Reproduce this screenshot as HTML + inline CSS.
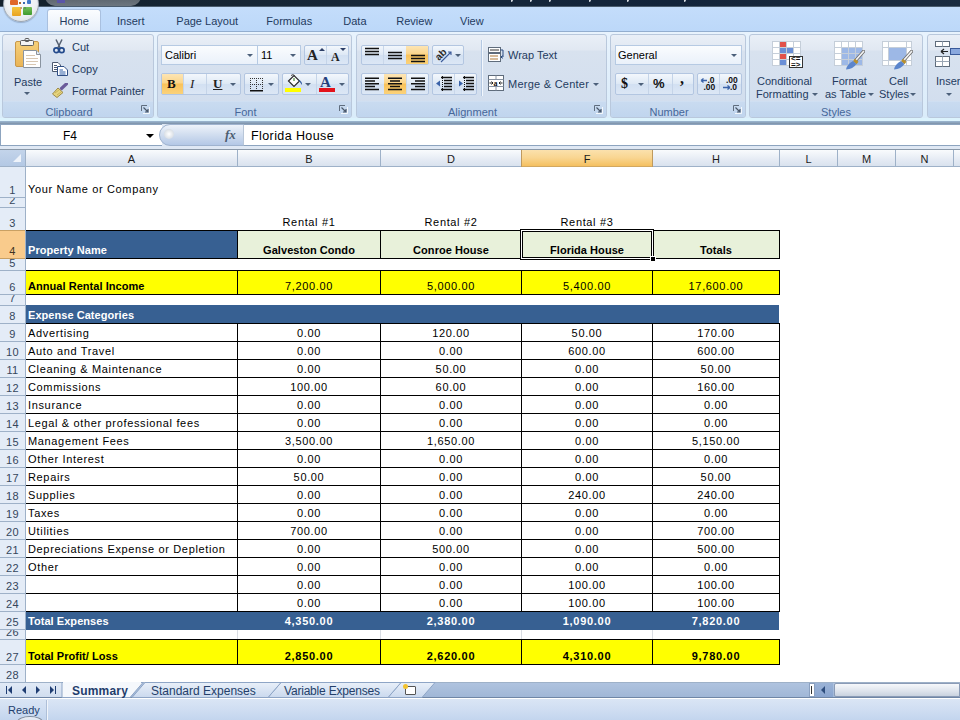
<!DOCTYPE html><html><head><meta charset="utf-8"><title>Excel</title><style>
*{margin:0;padding:0;box-sizing:border-box}
html,body{width:960px;height:720px;overflow:hidden}
body{position:relative;background:#fff;font-family:"Liberation Sans",sans-serif;font-size:11px;color:#000}
.a{position:absolute}
.t{position:absolute;white-space:nowrap;line-height:12px}
.c{text-align:center}
.rib{color:#243b60}
.grp{position:absolute;top:34px;height:84px;border:1px solid #b9c8dc;border-radius:3px;
 background:linear-gradient(#e9eff7 0px,#e1e8f2 15px,#d8e2ef 16px,#d2deee 68px)}
.glab{position:absolute;left:0;right:0;bottom:0;height:16px;background:linear-gradient(#c9dbf0,#c0d5ee);border-top:1px solid #cfdff2;
 color:#46679a;text-align:center;line-height:20px;font-size:11px;border-radius:0 0 2px 2px}
.launch{position:absolute;right:3px;bottom:3px;width:9px;height:9px}
.btn{position:absolute;border:1px solid #b3c6e1;border-radius:2px;background:linear-gradient(#f3f7fc,#dde8f5 50%,#d2e0f2 51%,#dce7f5)}
.combo{position:absolute;border:1px solid #b6cae3;background:linear-gradient(#fafcfe,#eaf1fa);}
.arr{position:absolute;width:0;height:0;border-left:3px solid transparent;border-right:3px solid transparent;border-top:3px solid #4c607a}
.hot{background:linear-gradient(#fde5b4,#fbd58a 45%,#f9c25a 50%,#fbd27a)!important;border-color:#c2a265!important}
.colh{position:absolute;top:150px;height:16px;background:linear-gradient(#f9fbfd,#e5ebf4 60%,#d9e2ee);color:#1b1b1b;text-align:center;line-height:19px;font-size:11px}
.rowh{position:absolute;left:0;width:25px;background:#e4ecf7;color:#23344a;text-align:center;font-size:11px;overflow:hidden}
.vl{position:absolute;width:1px;background:#000}
.hl{position:absolute;height:1px;background:#000}
.cell{position:absolute;white-space:nowrap;line-height:12px;letter-spacing:.65px}
.b{font-weight:bold;letter-spacing:.05px}
.bn{letter-spacing:.7px}
</style></head><body>
<div class="a" style="left:0;top:0;width:960px;height:8px;background:linear-gradient(90deg,#14212c,#17283a 40%,#13243a 70%,#1b2c40)"></div>
<div class="a" style="left:45px;top:-8px;width:96px;height:14px;border-radius:0 0 10px 10px;background:linear-gradient(#4f5861,#6d767f);"></div>
<div class="a" style="left:57px;top:0;width:8px;height:3px;background:#5a55a8"></div>
<div class="a" style="left:0;top:6px;width:960px;height:1px;background:#4a5c6e"></div>
<div class="a" style="left:511px;top:0;width:2px;height:2px;background:#d9dee4;border-radius:0 0 2px 0"></div>
<div class="a" style="left:530px;top:0;width:2px;height:2px;background:#d9dee4;border-radius:0 0 2px 0"></div>
<div class="a" style="left:549px;top:0;width:2px;height:2px;background:#d9dee4;border-radius:0 0 2px 0"></div>
<div class="a" style="left:589px;top:0;width:2px;height:2px;background:#d9dee4;border-radius:0 0 2px 0"></div>
<div class="a" style="left:627px;top:0;width:2px;height:2px;background:#d9dee4;border-radius:0 0 2px 0"></div>
<div class="a" style="left:684px;top:0;width:2px;height:2px;background:#d9dee4;border-radius:0 0 2px 0"></div>
<div class="a" style="left:0;top:7px;width:960px;height:25px;background:linear-gradient(#c4ddfb,#bcd8f9)"></div>
<div class="a" style="left:47px;top:9px;width:54px;height:24px;border:1px solid #a9c0df;border-bottom:none;border-radius:3px 3px 0 0;background:linear-gradient(#fbfdff,#e6eef9)"></div>
<div class="t rib" style="left:59.5px;top:15px">Home</div>
<div class="t rib" style="left:117px;top:15px">Insert</div>
<div class="t rib" style="left:176.3px;top:15px">Page Layout</div>
<div class="t rib" style="left:266.3px;top:15px">Formulas</div>
<div class="t rib" style="left:343.3px;top:15px">Data</div>
<div class="t rib" style="left:396.3px;top:15px">Review</div>
<div class="t rib" style="left:460px;top:15px">View</div>
<div class="a" style="left:3px;top:-14px;width:36px;height:36px;border-radius:18px;background:radial-gradient(circle at 50% 40%,#fbfcfd 0,#eef1f4 55%,#dde2e7 82%,#c3c9d0 100%);border:1px solid #9ea7b1;box-shadow:0 1px 1px rgba(60,80,110,.3)"></div>
<div class="a" style="left:10px;top:0;width:8px;height:5px;background:#e0662a;border-radius:1px"></div>
<div class="a" style="left:27px;top:0;width:4px;height:4px;background:#3f79c9;border-radius:1px"></div>
<div class="a" style="left:12px;top:7px;width:9px;height:9px;background:linear-gradient(#f5c640,#e8a220);border-radius:1px"></div>
<div class="a" style="left:23px;top:7px;width:9px;height:8px;background:linear-gradient(#76c05a,#3e9a2e);border-radius:1px"></div>
<div class="a" style="left:19px;top:2px;width:2px;height:2px;background:#a86a3a"></div>
<div class="a" style="left:23px;top:2px;width:2px;height:2px;background:#3a6ab0"></div>
<div class="a" style="left:20px;top:7px;width:2px;height:2px;background:#c9a070"></div>
<div class="a" style="left:24px;top:7px;width:2px;height:2px;background:#5a9a5a"></div>
<div class="a" style="left:0;top:31px;width:960px;height:91px;background:linear-gradient(#e8f3fd,#dfeefb 60%,#d9ecfa);border-top:1px solid #93aecf"></div>
<div class="a" style="left:0;top:118px;width:960px;height:3px;background:#dcf3fd"></div>
<div class="a" style="left:0;top:121px;width:960px;height:3px;background:linear-gradient(#9db8d2,#7d91a8)"></div>
<div class="grp" style="left:2px;width:152px"><div class="glab" style="padding-right:18px">Clipboard</div><svg class="launch" viewBox="0 0 9 9"><path d="M0.5 6 V0.5 H6" stroke="#5f6d7e" fill="none"/><path d="M2 8.5 H8.5 V2" stroke="#f4f8fc" fill="none"/><path d="M2.5 2.5 L7 7 M4 7 H7 V4" stroke="#4a586a" stroke-width="1.2" fill="none"/></svg></div>
<div class="grp" style="left:157px;width:195px"><div class="glab" style="padding-right:18px">Font</div><svg class="launch" viewBox="0 0 9 9"><path d="M0.5 6 V0.5 H6" stroke="#5f6d7e" fill="none"/><path d="M2 8.5 H8.5 V2" stroke="#f4f8fc" fill="none"/><path d="M2.5 2.5 L7 7 M4 7 H7 V4" stroke="#4a586a" stroke-width="1.2" fill="none"/></svg></div>
<div class="grp" style="left:356px;width:251px"><div class="glab" style="padding-right:18px">Alignment</div><svg class="launch" viewBox="0 0 9 9"><path d="M0.5 6 V0.5 H6" stroke="#5f6d7e" fill="none"/><path d="M2 8.5 H8.5 V2" stroke="#f4f8fc" fill="none"/><path d="M2.5 2.5 L7 7 M4 7 H7 V4" stroke="#4a586a" stroke-width="1.2" fill="none"/></svg></div>
<div class="grp" style="left:610px;width:136px"><div class="glab" style="padding-right:18px">Number</div><svg class="launch" viewBox="0 0 9 9"><path d="M0.5 6 V0.5 H6" stroke="#5f6d7e" fill="none"/><path d="M2 8.5 H8.5 V2" stroke="#f4f8fc" fill="none"/><path d="M2.5 2.5 L7 7 M4 7 H7 V4" stroke="#4a586a" stroke-width="1.2" fill="none"/></svg></div>
<div class="grp" style="left:749px;width:174px"><div class="glab" style="padding-right:0px">Styles</div></div>
<div class="grp" style="left:927px;width:60px"><div class="glab" style="padding-right:0px"></div></div>
<svg class="a" style="left:14px;top:38px" width="28" height="32" viewBox="0 0 28 32">
<defs><linearGradient id="pg" x1="0" y1="0" x2="0" y2="1"><stop offset="0" stop-color="#f6d07a"/><stop offset="1" stop-color="#eab456"/></linearGradient></defs>
<rect x="1.5" y="3.5" width="23" height="25" rx="1.5" fill="url(#pg)" stroke="#c8974a"/>
<rect x="6.5" y="2.5" width="13" height="5" rx="1" fill="#f4f4f4" stroke="#5e5e5e"/>
<rect x="11" y="0.5" width="4" height="3" rx="1" fill="none" stroke="#5e5e5e"/>
<path d="M9.5 12.5 H22.5 L26.5 16.5 V29.5 H9.5 Z" fill="#fff" stroke="#8a94a0"/>
<path d="M22.5 12.5 V16.5 H26.5" fill="#e8ecf0" stroke="#8a94a0"/>
<path d="M12 17.5 H21 M12 20.5 H24 M12 23.5 H24 M12 26.5 H22" stroke="#d8c7b2"/>
</svg>
<div class="t rib" style="left:14px;top:76px">Paste</div>
<div class="arr" style="left:24px;top:92px"></div>
<svg class="a" style="left:52px;top:39px" width="14" height="15" viewBox="0 0 14 15">
<path d="M4 0.5 L8.2 9 M10 0.5 L5.8 9" stroke="#555f70" stroke-width="1.5" fill="none"/>
<circle cx="4.3" cy="11.2" r="2.4" stroke="#234a8c" stroke-width="1.7" fill="none"/>
<circle cx="9.7" cy="11.2" r="2.4" stroke="#234a8c" stroke-width="1.7" fill="none"/></svg>
<div class="t rib" style="left:72px;top:41px">Cut</div>
<svg class="a" style="left:52px;top:62px" width="16" height="14" viewBox="0 0 16 14">
<path d="M0.5 0.5 H6 L8.5 3 V9.5 H0.5 Z" fill="#fff" stroke="#4d5a70"/>
<path d="M2 3.5 H5 M2 5.5 H6.5 M2 7.5 H6.5" stroke="#4d5a70"/>
<path d="M5.5 4.5 H12 L15.5 8 V13.5 H5.5 Z" fill="#fff" stroke="#2f4f86"/>
<path d="M7.5 8 H11 M7.5 10 H13.5 M7.5 12 H13.5" stroke="#2f5ea8"/>
</svg>
<div class="t rib" style="left:72px;top:63px">Copy</div>
<svg class="a" style="left:52px;top:83px" width="16" height="15" viewBox="0 0 16 15">
<path d="M9.5 5.5 L14.5 0.8" stroke="#6a5a9a" stroke-width="3.2" stroke-linecap="round"/>
<path d="M0.5 11 L6 5 L11 9.5 L5 14.5 Z" fill="#e6d47e" stroke="#9c8a48" stroke-width="1"/>
<path d="M3 10 L7 7 M5 12 L9 9" stroke="#c9b45a"/>
</svg>
<div class="t rib" style="left:72px;top:85px">Format Painter</div>
<div class="combo" style="left:161px;top:45px;width:97px;height:20px"></div>
<div class="t" style="left:165px;top:49px;color:#000">Calibri</div>
<div class="arr" style="left:247px;top:54px"></div>
<div class="combo" style="left:257px;top:45px;width:44px;height:20px"></div>
<div class="t" style="left:261px;top:49px;color:#000">11</div>
<div class="arr" style="left:290px;top:54px"></div>
<div class="btn" style="left:304px;top:45px;width:45px;height:20px"></div>
<div class="a" style="left:326px;top:46px;width:1px;height:18px;background:#c5d4e8"></div>
<div class="t" style="left:307px;top:47px;font:bold 15px 'Liberation Serif',serif;color:#222;line-height:16px">A</div>
<div class="a" style="left:319px;top:48px;width:0;height:0;border-left:3px solid transparent;border-right:3px solid transparent;border-bottom:3px solid #2c3e66"></div>
<div class="t" style="left:331px;top:50px;font:bold 12px 'Liberation Serif',serif;color:#222;line-height:14px">A</div>
<div class="arr" style="left:340px;top:48px;border-top-color:#2c3e66"></div>
<div class="btn" style="left:161px;top:73px;width:80px;height:22px"></div>
<div class="a hot" style="left:162px;top:74px;width:21px;height:20px;border:none"></div>
<div class="a" style="left:183px;top:74px;width:1px;height:20px;background:#c5d4e8"></div>
<div class="a" style="left:206px;top:74px;width:1px;height:20px;background:#c5d4e8"></div>
<div class="t" style="left:167px;top:77px;font:bold 13px 'Liberation Serif',serif;color:#111;line-height:14px">B</div>
<div class="t" style="left:190px;top:77px;font:italic 13px 'Liberation Serif',serif;color:#222;line-height:14px">I</div>
<div class="t" style="left:213px;top:77px;font:bold 13px 'Liberation Serif',serif;color:#222;line-height:14px;text-decoration:underline">U</div>
<div class="arr" style="left:230px;top:83px"></div>
<div class="btn" style="left:244px;top:73px;width:35px;height:22px"></div>
<svg class="a" style="left:250px;top:78px" width="14" height="14" viewBox="0 0 14 14"><rect x="0" y="0" width="1" height="1" fill="#333"/><rect x="2" y="0" width="1" height="1" fill="#333"/><rect x="4" y="0" width="1" height="1" fill="#333"/><rect x="6" y="0" width="1" height="1" fill="#333"/><rect x="8" y="0" width="1" height="1" fill="#333"/><rect x="10" y="0" width="1" height="1" fill="#333"/><rect x="12" y="0" width="1" height="1" fill="#333"/><rect x="0" y="2" width="1" height="1" fill="#333"/><rect x="6" y="2" width="1" height="1" fill="#333"/><rect x="12" y="2" width="1" height="1" fill="#333"/><rect x="0" y="4" width="1" height="1" fill="#333"/><rect x="6" y="4" width="1" height="1" fill="#333"/><rect x="12" y="4" width="1" height="1" fill="#333"/><rect x="0" y="6" width="1" height="1" fill="#333"/><rect x="2" y="6" width="1" height="1" fill="#333"/><rect x="4" y="6" width="1" height="1" fill="#333"/><rect x="6" y="6" width="1" height="1" fill="#333"/><rect x="8" y="6" width="1" height="1" fill="#333"/><rect x="10" y="6" width="1" height="1" fill="#333"/><rect x="12" y="6" width="1" height="1" fill="#333"/><rect x="0" y="8" width="1" height="1" fill="#333"/><rect x="6" y="8" width="1" height="1" fill="#333"/><rect x="12" y="8" width="1" height="1" fill="#333"/><rect x="0" y="10" width="1" height="1" fill="#333"/><rect x="6" y="10" width="1" height="1" fill="#333"/><rect x="12" y="10" width="1" height="1" fill="#333"/><rect x="0" y="12" width="13" height="1.5" fill="#111"/></svg>
<div class="arr" style="left:268px;top:83px"></div>
<div class="btn" style="left:282px;top:73px;width:67px;height:22px"></div>
<div class="a" style="left:316px;top:74px;width:1px;height:20px;background:#c5d4e8"></div>
<svg class="a" style="left:286px;top:74px" width="18" height="14" viewBox="0 0 18 14"><path d="M2.5 7 L8 1.5 L13.5 7 L8 12.5 Z" fill="#fff" stroke="#2b2b2b" stroke-width="1.2"/><path d="M5 1.5 Q7 -0.5 9 2" stroke="#444" fill="none"/><path d="M12 5.5 Q16.5 7 16 11 L14.5 9 Z" fill="#2e5aa0"/><path d="M8 4 L8 7" stroke="#4d8a3a" stroke-width="1.2"/></svg>
<div class="a" style="left:285px;top:88px;width:16px;height:4px;background:#ffff00"></div>
<div class="arr" style="left:305px;top:83px"></div>
<div class="t" style="left:320px;top:75px;font:bold 15px 'Liberation Serif',serif;color:#243f7c;line-height:14px">A</div>
<div class="a" style="left:319px;top:88px;width:16px;height:4px;background:#e3121b"></div>
<div class="arr" style="left:339px;top:83px"></div>
<div class="btn" style="left:361px;top:45px;width:68px;height:20px"></div>
<div class="a" style="left:383px;top:46px;width:1px;height:18px;background:#c9d7ea"></div>
<div class="a hot" style="left:406px;top:46px;width:22px;height:18px;border:none"></div>
<svg class="a" style="left:365px;top:47px" width="16" height="16" viewBox="0 0 16 16"><path d="M0 1.5H14M0 4.5H14M0 7.5H14" stroke="#111" stroke-width="1.5" fill="none"/></svg>
<svg class="a" style="left:388px;top:51px" width="16" height="16" viewBox="0 0 16 16"><path d="M0 1.5H14M0 4.5H14M0 7.5H14" stroke="#111" stroke-width="1.5" fill="none"/></svg>
<svg class="a" style="left:411px;top:54px" width="16" height="16" viewBox="0 0 16 16"><path d="M0 1.5H14M0 4.5H14M0 7.5H14" stroke="#111" stroke-width="1.5" fill="none"/></svg>
<div class="btn" style="left:432px;top:45px;width:32px;height:20px"></div>
<svg class="a" style="left:436px;top:47px" width="18" height="16" viewBox="0 0 18 16">
<text x="0" y="0" transform="translate(3,14) rotate(-45)" font-family="Liberation Sans" font-weight="bold" font-size="10" fill="#2a2a2a">ab</text>
<path d="M5 15 L15 5 M12 5 H15 V8" stroke="#3b5a9a" stroke-width="1.1" fill="none"/></svg>
<div class="arr" style="left:455px;top:54px"></div>
<div class="btn" style="left:361px;top:73px;width:68px;height:22px"></div>
<div class="a hot" style="left:384px;top:74px;width:22px;height:20px;border:none"></div>
<div class="a" style="left:406px;top:74px;width:1px;height:20px;background:#c9d7ea"></div>
<svg class="a" style="left:365px;top:77px" width="16" height="16" viewBox="0 0 16 16"><path d="M0 1.2H14M0 4H10M0 6.8H14M0 9.6H10M0 12.4H14" stroke="#111" stroke-width="1.5" fill="none"/></svg>
<svg class="a" style="left:388px;top:77px" width="16" height="16" viewBox="0 0 16 16"><path d="M0 1.2H14M2 4H12M0 6.8H14M2 9.6H12M0 12.4H14" stroke="#111" stroke-width="1.5" fill="none"/></svg>
<svg class="a" style="left:411px;top:77px" width="16" height="16" viewBox="0 0 16 16"><path d="M0 1.2H14M4 4H14M0 6.8H14M4 9.6H14M0 12.4H14" stroke="#111" stroke-width="1.5" fill="none"/></svg>
<div class="btn" style="left:432px;top:73px;width:45px;height:22px"></div>
<div class="a" style="left:454px;top:74px;width:1px;height:20px;background:#c9d7ea"></div>
<svg class="a" style="left:436px;top:76px" width="17" height="15" viewBox="0 0 17 15">
<path d="M5 1.5H16 M8 4.5H16 M8 7.5H16 M8 10.5H16 M5 13.5H16" stroke="#111" stroke-width="1.4"/>
<path d="M6.5 0V15" stroke="#111" stroke-width="1" stroke-dasharray="1 1"/>
<path d="M0 7.5 L4 4.5 V10.5 Z" fill="#3a62a8"/></svg>
<svg class="a" style="left:458px;top:76px" width="17" height="15" viewBox="0 0 17 15">
<path d="M5 1.5H16 M8 4.5H16 M8 7.5H16 M8 10.5H16 M5 13.5H16" stroke="#111" stroke-width="1.4"/>
<path d="M6.5 0V15" stroke="#111" stroke-width="1" stroke-dasharray="1 1"/>
<path d="M5 7.5 L1 4.5 V10.5 Z" fill="#3a62a8"/></svg>
<div class="a" style="left:481px;top:40px;width:1px;height:56px;background:#b5c9e3;box-shadow:1px 0 0 #f2f7fd"></div>
<svg class="a" style="left:488px;top:47px" width="17" height="15" viewBox="0 0 17 15">
<rect x="0.5" y="0.5" width="12" height="5" fill="#fff" stroke="#5f6c7c"/><path d="M2 3 H11" stroke="#333"/>
<rect x="0.5" y="6.5" width="12" height="8" fill="#fff" stroke="#5f6c7c"/><path d="M2 9 H10 M2 12 H10" stroke="#b07a3a" stroke-width="1.2"/>
<path d="M12.5 3 H15 V10 H13 M14.5 8.5 L13 10 L14.5 11.5" stroke="#2a4a80" fill="none"/>
</svg>
<div class="t rib" style="left:508px;top:49px">Wrap Text</div>
<svg class="a" style="left:488px;top:75px" width="17" height="16" viewBox="0 0 17 16">
<rect x="0.5" y="0.5" width="15" height="15" fill="#fff" stroke="#5f6c7c"/>
<path d="M0.5 4.5H15.5 M0.5 11.5H15.5 M8 0.5V4.5 M8 11.5V15.5" stroke="#8893a2"/>
<path d="M1.5 8 H5 M3.5 6.5 L5 8 L3.5 9.5 M14.5 8 H11 M12.5 6.5 L11 8 L12.5 9.5" stroke="#222" fill="none"/>
<text x="5.5" y="10.5" font-family="Liberation Serif" font-weight="bold" font-size="8" fill="#111">a</text>
</svg>
<div class="t rib" style="left:508px;top:78px;letter-spacing:.25px">Merge &amp; Center</div>
<div class="arr" style="left:593px;top:83px"></div>
<div class="combo" style="left:615px;top:45px;width:127px;height:20px"></div>
<div class="t" style="left:618px;top:49px;color:#000">General</div>
<div class="arr" style="left:731px;top:54px"></div>
<div class="btn" style="left:615px;top:73px;width:79px;height:22px"></div>
<div class="a" style="left:648px;top:74px;width:1px;height:20px;background:#c5d4e8"></div>
<div class="a" style="left:672px;top:74px;width:1px;height:20px;background:#c5d4e8"></div>
<div class="t" style="left:621px;top:77px;font:bold 14px 'Liberation Serif',serif;color:#111;line-height:14px">$</div>
<div class="arr" style="left:638px;top:83px"></div>
<div class="t" style="left:653px;top:77px;font:bold 13px 'Liberation Sans',sans-serif;color:#111;line-height:14px">%</div>
<div class="t" style="left:680px;top:72px;font:bold 16px 'Liberation Serif',serif;color:#111;line-height:14px">,</div>
<div class="btn" style="left:697px;top:73px;width:45px;height:22px"></div>
<div class="a" style="left:719px;top:74px;width:1px;height:20px;background:#c5d4e8"></div>
<svg class="a" style="left:699px;top:76px" width="42" height="15" viewBox="0 0 42 15">
<g font-family="Liberation Sans" font-weight="bold" font-size="8.5" fill="#111">
<text x="8.5" y="7">.0</text><text x="4.5" y="14">.00</text>
<text x="27" y="7">.00</text><text x="31" y="14">.0</text></g>
<path d="M2 4.5 H8 M2 4.5 L4.5 2.5 M2 4.5 L4.5 6.5" stroke="#3a62a8" stroke-width="1.3" fill="none"/>
<path d="M24 11.5 H31 M31 11.5 L28.5 9.5 M31 11.5 L28.5 13.5" stroke="#3a62a8" stroke-width="1.3" fill="none"/>
</svg>
<div class="a" style="left:772px;top:41px;width:29px;height:25px;background:#c5ced9"></div><div class="a" style="left:773px;top:42px;width:6px;height:5px;background:#fff"></div><div class="a" style="left:780px;top:42px;width:6px;height:5px;background:#e2524a"></div><div class="a" style="left:787px;top:42px;width:6px;height:5px;background:#fff"></div><div class="a" style="left:794px;top:42px;width:6px;height:5px;background:#fff"></div><div class="a" style="left:773px;top:48px;width:6px;height:5px;background:#fff"></div><div class="a" style="left:780px;top:48px;width:6px;height:5px;background:#6a8fd6"></div><div class="a" style="left:787px;top:48px;width:6px;height:5px;background:#6a8fd6"></div><div class="a" style="left:794px;top:48px;width:6px;height:5px;background:#fff"></div><div class="a" style="left:773px;top:54px;width:6px;height:5px;background:#fff"></div><div class="a" style="left:780px;top:54px;width:6px;height:5px;background:#e2524a"></div><div class="a" style="left:787px;top:54px;width:6px;height:5px;background:#fff"></div><div class="a" style="left:794px;top:54px;width:6px;height:5px;background:#fff"></div><div class="a" style="left:773px;top:60px;width:6px;height:5px;background:#fff"></div><div class="a" style="left:780px;top:60px;width:6px;height:5px;background:#6a8fd6"></div><div class="a" style="left:787px;top:60px;width:6px;height:5px;background:#fff"></div><div class="a" style="left:794px;top:60px;width:6px;height:5px;background:#fff"></div>
<div class="a" style="left:789px;top:56px;width:14px;height:12px;background:#fff;border:1px solid #333"></div>
<div class="t" style="left:791px;top:56px;font:bold 8px 'Liberation Sans',sans-serif;line-height:6px;color:#111">&lt;=<br>=&gt;</div>
<div class="t rib" style="left:757px;top:75px">Conditional</div>
<div class="t rib" style="left:756px;top:88px">Formatting</div>
<div class="arr" style="left:812px;top:93px"></div>
<div class="a" style="left:834px;top:41px;width:29px;height:25px;background:#c5ced9"></div><div class="a" style="left:835px;top:42px;width:6px;height:5px;background:#fff"></div><div class="a" style="left:842px;top:42px;width:6px;height:5px;background:#fff"></div><div class="a" style="left:849px;top:42px;width:6px;height:5px;background:#fff"></div><div class="a" style="left:856px;top:42px;width:6px;height:5px;background:#fff"></div><div class="a" style="left:835px;top:48px;width:6px;height:5px;background:#fff"></div><div class="a" style="left:842px;top:48px;width:6px;height:5px;background:#9db8e6"></div><div class="a" style="left:849px;top:48px;width:6px;height:5px;background:#9db8e6"></div><div class="a" style="left:856px;top:48px;width:6px;height:5px;background:#9db8e6"></div><div class="a" style="left:835px;top:54px;width:6px;height:5px;background:#fff"></div><div class="a" style="left:842px;top:54px;width:6px;height:5px;background:#9db8e6"></div><div class="a" style="left:849px;top:54px;width:6px;height:5px;background:#9db8e6"></div><div class="a" style="left:856px;top:54px;width:6px;height:5px;background:#9db8e6"></div><div class="a" style="left:835px;top:60px;width:6px;height:5px;background:#fff"></div><div class="a" style="left:842px;top:60px;width:6px;height:5px;background:#9db8e6"></div><div class="a" style="left:849px;top:60px;width:6px;height:5px;background:#9db8e6"></div><div class="a" style="left:856px;top:60px;width:6px;height:5px;background:#9db8e6"></div>
<svg class="a" style="left:843px;top:50px" width="22" height="20" viewBox="0 0 22 20"><path d="M20.5 1.5 L13 10" stroke="#6b6b6b" stroke-width="3.4" stroke-linecap="round"/><path d="M20.5 1.5 L13 10" stroke="#f2f2f2" stroke-width="1.8" stroke-linecap="round"/><path d="M11 10 L14.5 13" stroke="#b8902e" stroke-width="3"/><path d="M3 19.5 Q4 14 10 11 L13.5 14 Q10 19 3 19.5Z" fill="#5b85cc"/></svg>
<div class="t rib" style="left:832px;top:75px">Format</div>
<div class="t rib" style="left:825px;top:88px">as Table</div>
<div class="arr" style="left:868px;top:93px"></div>
<div class="a" style="left:882px;top:41px;width:30px;height:25px;background:#c5ced9"></div>
<div class="a" style="left:883px;top:42px;width:28px;height:23px;background:#fff"></div>
<div class="a" style="left:889px;top:47px;width:17px;height:13px;background:#9db8e6"></div>
<div class="a" style="left:882px;top:47px;width:30px;height:1px;background:#c5ced9"></div>
<div class="a" style="left:882px;top:60px;width:30px;height:1px;background:#c5ced9"></div>
<div class="a" style="left:888px;top:41px;width:1px;height:25px;background:#c5ced9"></div>
<div class="a" style="left:906px;top:41px;width:1px;height:25px;background:#c5ced9"></div>
<svg class="a" style="left:891px;top:50px" width="22" height="20" viewBox="0 0 22 20"><path d="M20.5 1.5 L13 10" stroke="#6b6b6b" stroke-width="3.4" stroke-linecap="round"/><path d="M20.5 1.5 L13 10" stroke="#f2f2f2" stroke-width="1.8" stroke-linecap="round"/><path d="M11 10 L14.5 13" stroke="#b8902e" stroke-width="3"/><path d="M3 19.5 Q4 14 10 11 L13.5 14 Q10 19 3 19.5Z" fill="#5b85cc"/></svg>
<div class="t rib" style="left:889px;top:75px">Cell</div>
<div class="t rib" style="left:879px;top:88px">Styles</div>
<div class="arr" style="left:910px;top:93px"></div>
<svg class="a" style="left:935px;top:41px" width="25" height="26" viewBox="0 0 25 26">
<rect x="0.5" y="0.5" width="14" height="5" fill="#fff" stroke="#5f6c7c"/><path d="M7.5 0.5V5.5" stroke="#9aa6b4"/>
<rect x="0.5" y="15.5" width="14" height="10" fill="#fff" stroke="#5f6c7c"/><path d="M7.5 15.5V25.5 M0.5 20.5H14.5" stroke="#9aa6b4"/>
<rect x="15.5" y="7.5" width="10" height="6" fill="#8aa8de" stroke="#3a5a9a"/>
<path d="M6 10.5 H13 M6 10.5 L9 8 M6 10.5 L9 13" stroke="#222" stroke-width="1.2" fill="none"/>
</svg>
<div class="t rib" style="left:936px;top:75px">Insert</div>
<div class="arr" style="left:946px;top:93px"></div>
<div class="a" style="left:0;top:124px;width:960px;height:25px;background:#dfe8f4"></div>
<div class="a" style="left:0;top:124px;width:162px;height:22px;background:#fff;border:1px solid #8da4bf;border-right:none"></div>
<div class="t c" style="left:40px;top:130px;width:60px;font-size:12px;color:#000">F4</div>
<div class="arr" style="left:146px;top:134px;border-left-width:4px;border-right-width:4px;border-top:4px solid #000"></div>
<div class="a" style="left:159px;top:124px;width:85px;height:22px;border-radius:11px 0 0 11px;background:linear-gradient(#eef3fa,#d3dff0 45%,#b4c8e6);border:1px solid #9fb3cf"></div>
<div class="a" style="left:164px;top:129px;width:10px;height:10px;border-radius:5px;background:radial-gradient(#ffffff,#c9d1da)"></div>
<div class="t" style="left:225px;top:128px;font:italic bold 13px 'Liberation Serif',serif;color:#4d5d70;line-height:14px">fx</div>
<div class="a" style="left:243px;top:124px;width:717px;height:22px;background:#fff;border-top:1px solid #8da4bf;border-bottom:1px solid #8da4bf;border-left:1px solid #b8c6d8"></div>
<div class="t" style="left:251px;top:130px;font-size:12.5px;color:#000;letter-spacing:.4px">Florida House</div>
<div class="a" style="left:0;top:149px;width:960px;height:1px;background:#8a98a8"></div>
<div class="a" style="left:0;top:150px;width:25px;height:16px;background:linear-gradient(#c3d4ea,#b3c8e4)"></div>
<div class="a" style="left:13px;top:154px;width:0;height:0;border-left:8px solid transparent;border-bottom:8px solid #eef3fa"></div>
<div class="colh" style="left:26px;width:211px;">A</div>
<div class="colh" style="left:238px;width:142px;">B</div>
<div class="colh" style="left:381px;width:140px;">D</div>
<div class="colh" style="left:522px;width:130px;background:linear-gradient(#fbe1ad,#f9d590 50%,#f5c060)">F</div>
<div class="colh" style="left:653px;width:126px;">H</div>
<div class="colh" style="left:780px;width:57px;">L</div>
<div class="colh" style="left:838px;width:57px;">M</div>
<div class="colh" style="left:896px;width:57px;">N</div>
<div class="colh" style="left:954px;width:6px;"></div>
<div class="a" style="left:0;top:166px;width:960px;height:1px;background:#9eb1c8"></div>
<div class="a" style="left:521px;top:166px;width:132px;height:1px;background:#d2a860"></div>
<div class="a" style="left:25px;top:150px;width:1px;height:17px;background:#9eb1c8"></div>
<div class="a" style="left:237px;top:150px;width:1px;height:17px;background:#9eb1c8"></div>
<div class="a" style="left:380px;top:150px;width:1px;height:17px;background:#9eb1c8"></div>
<div class="a" style="left:521px;top:150px;width:1px;height:17px;background:#bf9a5e"></div>
<div class="a" style="left:652px;top:150px;width:1px;height:17px;background:#bf9a5e"></div>
<div class="a" style="left:779px;top:150px;width:1px;height:17px;background:#9eb1c8"></div>
<div class="a" style="left:837px;top:150px;width:1px;height:17px;background:#9eb1c8"></div>
<div class="a" style="left:895px;top:150px;width:1px;height:17px;background:#9eb1c8"></div>
<div class="a" style="left:953px;top:150px;width:1px;height:17px;background:#9eb1c8"></div>
<div class="rowh" style="top:167px;height:30px;"><div class="t c" style="left:0;width:25px;top:17px;color:#35465c;letter-spacing:.3px">1</div></div>
<div class="a" style="left:0;top:197px;width:25px;height:1px;background:#9eb1c8"></div>
<div class="rowh" style="top:198px;height:9px;"><div class="t c" style="left:0;width:25px;top:-4px;color:#35465c;letter-spacing:.3px">2</div></div>
<div class="a" style="left:0;top:207px;width:25px;height:1px;background:#9eb1c8"></div>
<div class="rowh" style="top:208px;height:22px;"><div class="t c" style="left:0;width:25px;top:9px;color:#35465c;letter-spacing:.3px">3</div></div>
<div class="a" style="left:0;top:230px;width:25px;height:1px;background:#c9a063"></div>
<div class="rowh" style="top:231px;height:27px;background:#f9cb8c;"><div class="t c" style="left:0;width:25px;top:14px;color:#3e3322;letter-spacing:.3px">4</div></div>
<div class="a" style="left:0;top:258px;width:25px;height:1px;background:#c9a063"></div>
<div class="rowh" style="top:259px;height:11px;"><div class="t c" style="left:0;width:25px;top:-2px;color:#35465c;letter-spacing:.3px">5</div></div>
<div class="a" style="left:0;top:270px;width:25px;height:1px;background:#9eb1c8"></div>
<div class="rowh" style="top:271px;height:23px;"><div class="t c" style="left:0;width:25px;top:10px;color:#35465c;letter-spacing:.3px">6</div></div>
<div class="a" style="left:0;top:294px;width:25px;height:1px;background:#9eb1c8"></div>
<div class="rowh" style="top:295px;height:10px;"><div class="t c" style="left:0;width:25px;top:-3px;color:#35465c;letter-spacing:.3px">7</div></div>
<div class="a" style="left:0;top:305px;width:25px;height:1px;background:#9eb1c8"></div>
<div class="rowh" style="top:306px;height:17px;"><div class="t c" style="left:0;width:25px;top:4px;color:#35465c;letter-spacing:.3px">8</div></div>
<div class="a" style="left:0;top:323px;width:25px;height:1px;background:#9eb1c8"></div>
<div class="rowh" style="top:324px;height:17px;"><div class="t c" style="left:0;width:25px;top:4px;color:#35465c;letter-spacing:.3px">9</div></div>
<div class="a" style="left:0;top:341px;width:25px;height:1px;background:#9eb1c8"></div>
<div class="rowh" style="top:342px;height:17px;"><div class="t c" style="left:0;width:25px;top:4px;color:#35465c;letter-spacing:.3px">10</div></div>
<div class="a" style="left:0;top:359px;width:25px;height:1px;background:#9eb1c8"></div>
<div class="rowh" style="top:360px;height:17px;"><div class="t c" style="left:0;width:25px;top:4px;color:#35465c;letter-spacing:.3px">11</div></div>
<div class="a" style="left:0;top:377px;width:25px;height:1px;background:#9eb1c8"></div>
<div class="rowh" style="top:378px;height:17px;"><div class="t c" style="left:0;width:25px;top:4px;color:#35465c;letter-spacing:.3px">12</div></div>
<div class="a" style="left:0;top:395px;width:25px;height:1px;background:#9eb1c8"></div>
<div class="rowh" style="top:396px;height:17px;"><div class="t c" style="left:0;width:25px;top:4px;color:#35465c;letter-spacing:.3px">13</div></div>
<div class="a" style="left:0;top:413px;width:25px;height:1px;background:#9eb1c8"></div>
<div class="rowh" style="top:414px;height:17px;"><div class="t c" style="left:0;width:25px;top:4px;color:#35465c;letter-spacing:.3px">14</div></div>
<div class="a" style="left:0;top:431px;width:25px;height:1px;background:#9eb1c8"></div>
<div class="rowh" style="top:432px;height:17px;"><div class="t c" style="left:0;width:25px;top:4px;color:#35465c;letter-spacing:.3px">15</div></div>
<div class="a" style="left:0;top:449px;width:25px;height:1px;background:#9eb1c8"></div>
<div class="rowh" style="top:450px;height:17px;"><div class="t c" style="left:0;width:25px;top:4px;color:#35465c;letter-spacing:.3px">16</div></div>
<div class="a" style="left:0;top:467px;width:25px;height:1px;background:#9eb1c8"></div>
<div class="rowh" style="top:468px;height:17px;"><div class="t c" style="left:0;width:25px;top:4px;color:#35465c;letter-spacing:.3px">17</div></div>
<div class="a" style="left:0;top:485px;width:25px;height:1px;background:#9eb1c8"></div>
<div class="rowh" style="top:486px;height:17px;"><div class="t c" style="left:0;width:25px;top:4px;color:#35465c;letter-spacing:.3px">18</div></div>
<div class="a" style="left:0;top:503px;width:25px;height:1px;background:#9eb1c8"></div>
<div class="rowh" style="top:504px;height:17px;"><div class="t c" style="left:0;width:25px;top:4px;color:#35465c;letter-spacing:.3px">19</div></div>
<div class="a" style="left:0;top:521px;width:25px;height:1px;background:#9eb1c8"></div>
<div class="rowh" style="top:522px;height:17px;"><div class="t c" style="left:0;width:25px;top:4px;color:#35465c;letter-spacing:.3px">20</div></div>
<div class="a" style="left:0;top:539px;width:25px;height:1px;background:#9eb1c8"></div>
<div class="rowh" style="top:540px;height:17px;"><div class="t c" style="left:0;width:25px;top:4px;color:#35465c;letter-spacing:.3px">21</div></div>
<div class="a" style="left:0;top:557px;width:25px;height:1px;background:#9eb1c8"></div>
<div class="rowh" style="top:558px;height:17px;"><div class="t c" style="left:0;width:25px;top:4px;color:#35465c;letter-spacing:.3px">22</div></div>
<div class="a" style="left:0;top:575px;width:25px;height:1px;background:#9eb1c8"></div>
<div class="rowh" style="top:576px;height:17px;"><div class="t c" style="left:0;width:25px;top:4px;color:#35465c;letter-spacing:.3px">23</div></div>
<div class="a" style="left:0;top:593px;width:25px;height:1px;background:#9eb1c8"></div>
<div class="rowh" style="top:594px;height:17px;"><div class="t c" style="left:0;width:25px;top:4px;color:#35465c;letter-spacing:.3px">24</div></div>
<div class="a" style="left:0;top:611px;width:25px;height:1px;background:#9eb1c8"></div>
<div class="rowh" style="top:612px;height:17px;"><div class="t c" style="left:0;width:25px;top:4px;color:#35465c;letter-spacing:.3px">25</div></div>
<div class="a" style="left:0;top:629px;width:25px;height:1px;background:#9eb1c8"></div>
<div class="rowh" style="top:630px;height:9px;"><div class="t c" style="left:0;width:25px;top:-4px;color:#35465c;letter-spacing:.3px">26</div></div>
<div class="a" style="left:0;top:639px;width:25px;height:1px;background:#9eb1c8"></div>
<div class="rowh" style="top:640px;height:24px;"><div class="t c" style="left:0;width:25px;top:11px;color:#35465c;letter-spacing:.3px">27</div></div>
<div class="a" style="left:0;top:664px;width:25px;height:1px;background:#9eb1c8"></div>
<div class="rowh" style="top:665px;height:17px;"><div class="t c" style="left:0;width:25px;top:4px;color:#35465c;letter-spacing:.3px">28</div></div>
<div class="a" style="left:0;top:682px;width:25px;height:1px;background:#9eb1c8"></div>
<div class="a" style="left:25px;top:166px;width:1px;height:516px;background:#9eb1c8"></div>
<div class="a" style="left:26px;top:231px;width:211px;height:28px;background:#376092"></div>
<div class="a" style="left:237px;top:231px;width:542px;height:28px;background:#e8f1da"></div>
<div class="a" style="left:26px;top:271px;width:753px;height:24px;background:#ffff00"></div>
<div class="a" style="left:26px;top:305px;width:753px;height:19px;background:#376092"></div>
<div class="a" style="left:26px;top:612px;width:753px;height:18px;background:#376092"></div>
<div class="a" style="left:26px;top:640px;width:753px;height:25px;background:#ffff00"></div>
<div class="hl" style="left:26px;top:230px;width:754px"></div>
<div class="hl" style="left:26px;top:258px;width:754px"></div>
<div class="vl" style="left:237px;top:230px;height:29px"></div>
<div class="vl" style="left:380px;top:230px;height:29px"></div>
<div class="vl" style="left:521px;top:230px;height:29px"></div>
<div class="vl" style="left:652px;top:230px;height:29px"></div>
<div class="vl" style="left:779px;top:230px;height:29px"></div>
<div class="hl" style="left:26px;top:270px;width:754px"></div>
<div class="hl" style="left:26px;top:294px;width:754px"></div>
<div class="vl" style="left:237px;top:270px;height:25px"></div>
<div class="vl" style="left:380px;top:270px;height:25px"></div>
<div class="vl" style="left:521px;top:270px;height:25px"></div>
<div class="vl" style="left:652px;top:270px;height:25px"></div>
<div class="vl" style="left:779px;top:270px;height:25px"></div>
<div class="hl" style="left:26px;top:323px;width:754px"></div>
<div class="hl" style="left:26px;top:341px;width:754px"></div>
<div class="vl" style="left:237px;top:323px;height:19px"></div>
<div class="vl" style="left:380px;top:323px;height:19px"></div>
<div class="vl" style="left:521px;top:323px;height:19px"></div>
<div class="vl" style="left:652px;top:323px;height:19px"></div>
<div class="vl" style="left:779px;top:323px;height:19px"></div>
<div class="hl" style="left:26px;top:341px;width:754px"></div>
<div class="hl" style="left:26px;top:359px;width:754px"></div>
<div class="vl" style="left:237px;top:341px;height:19px"></div>
<div class="vl" style="left:380px;top:341px;height:19px"></div>
<div class="vl" style="left:521px;top:341px;height:19px"></div>
<div class="vl" style="left:652px;top:341px;height:19px"></div>
<div class="vl" style="left:779px;top:341px;height:19px"></div>
<div class="hl" style="left:26px;top:359px;width:754px"></div>
<div class="hl" style="left:26px;top:377px;width:754px"></div>
<div class="vl" style="left:237px;top:359px;height:19px"></div>
<div class="vl" style="left:380px;top:359px;height:19px"></div>
<div class="vl" style="left:521px;top:359px;height:19px"></div>
<div class="vl" style="left:652px;top:359px;height:19px"></div>
<div class="vl" style="left:779px;top:359px;height:19px"></div>
<div class="hl" style="left:26px;top:377px;width:754px"></div>
<div class="hl" style="left:26px;top:395px;width:754px"></div>
<div class="vl" style="left:237px;top:377px;height:19px"></div>
<div class="vl" style="left:380px;top:377px;height:19px"></div>
<div class="vl" style="left:521px;top:377px;height:19px"></div>
<div class="vl" style="left:652px;top:377px;height:19px"></div>
<div class="vl" style="left:779px;top:377px;height:19px"></div>
<div class="hl" style="left:26px;top:395px;width:754px"></div>
<div class="hl" style="left:26px;top:413px;width:754px"></div>
<div class="vl" style="left:237px;top:395px;height:19px"></div>
<div class="vl" style="left:380px;top:395px;height:19px"></div>
<div class="vl" style="left:521px;top:395px;height:19px"></div>
<div class="vl" style="left:652px;top:395px;height:19px"></div>
<div class="vl" style="left:779px;top:395px;height:19px"></div>
<div class="hl" style="left:26px;top:413px;width:754px"></div>
<div class="hl" style="left:26px;top:431px;width:754px"></div>
<div class="vl" style="left:237px;top:413px;height:19px"></div>
<div class="vl" style="left:380px;top:413px;height:19px"></div>
<div class="vl" style="left:521px;top:413px;height:19px"></div>
<div class="vl" style="left:652px;top:413px;height:19px"></div>
<div class="vl" style="left:779px;top:413px;height:19px"></div>
<div class="hl" style="left:26px;top:431px;width:754px"></div>
<div class="hl" style="left:26px;top:449px;width:754px"></div>
<div class="vl" style="left:237px;top:431px;height:19px"></div>
<div class="vl" style="left:380px;top:431px;height:19px"></div>
<div class="vl" style="left:521px;top:431px;height:19px"></div>
<div class="vl" style="left:652px;top:431px;height:19px"></div>
<div class="vl" style="left:779px;top:431px;height:19px"></div>
<div class="hl" style="left:26px;top:449px;width:754px"></div>
<div class="hl" style="left:26px;top:467px;width:754px"></div>
<div class="vl" style="left:237px;top:449px;height:19px"></div>
<div class="vl" style="left:380px;top:449px;height:19px"></div>
<div class="vl" style="left:521px;top:449px;height:19px"></div>
<div class="vl" style="left:652px;top:449px;height:19px"></div>
<div class="vl" style="left:779px;top:449px;height:19px"></div>
<div class="hl" style="left:26px;top:467px;width:754px"></div>
<div class="hl" style="left:26px;top:485px;width:754px"></div>
<div class="vl" style="left:237px;top:467px;height:19px"></div>
<div class="vl" style="left:380px;top:467px;height:19px"></div>
<div class="vl" style="left:521px;top:467px;height:19px"></div>
<div class="vl" style="left:652px;top:467px;height:19px"></div>
<div class="vl" style="left:779px;top:467px;height:19px"></div>
<div class="hl" style="left:26px;top:485px;width:754px"></div>
<div class="hl" style="left:26px;top:503px;width:754px"></div>
<div class="vl" style="left:237px;top:485px;height:19px"></div>
<div class="vl" style="left:380px;top:485px;height:19px"></div>
<div class="vl" style="left:521px;top:485px;height:19px"></div>
<div class="vl" style="left:652px;top:485px;height:19px"></div>
<div class="vl" style="left:779px;top:485px;height:19px"></div>
<div class="hl" style="left:26px;top:503px;width:754px"></div>
<div class="hl" style="left:26px;top:521px;width:754px"></div>
<div class="vl" style="left:237px;top:503px;height:19px"></div>
<div class="vl" style="left:380px;top:503px;height:19px"></div>
<div class="vl" style="left:521px;top:503px;height:19px"></div>
<div class="vl" style="left:652px;top:503px;height:19px"></div>
<div class="vl" style="left:779px;top:503px;height:19px"></div>
<div class="hl" style="left:26px;top:521px;width:754px"></div>
<div class="hl" style="left:26px;top:539px;width:754px"></div>
<div class="vl" style="left:237px;top:521px;height:19px"></div>
<div class="vl" style="left:380px;top:521px;height:19px"></div>
<div class="vl" style="left:521px;top:521px;height:19px"></div>
<div class="vl" style="left:652px;top:521px;height:19px"></div>
<div class="vl" style="left:779px;top:521px;height:19px"></div>
<div class="hl" style="left:26px;top:539px;width:754px"></div>
<div class="hl" style="left:26px;top:557px;width:754px"></div>
<div class="vl" style="left:237px;top:539px;height:19px"></div>
<div class="vl" style="left:380px;top:539px;height:19px"></div>
<div class="vl" style="left:521px;top:539px;height:19px"></div>
<div class="vl" style="left:652px;top:539px;height:19px"></div>
<div class="vl" style="left:779px;top:539px;height:19px"></div>
<div class="hl" style="left:26px;top:557px;width:754px"></div>
<div class="hl" style="left:26px;top:575px;width:754px"></div>
<div class="vl" style="left:237px;top:557px;height:19px"></div>
<div class="vl" style="left:380px;top:557px;height:19px"></div>
<div class="vl" style="left:521px;top:557px;height:19px"></div>
<div class="vl" style="left:652px;top:557px;height:19px"></div>
<div class="vl" style="left:779px;top:557px;height:19px"></div>
<div class="hl" style="left:26px;top:575px;width:754px"></div>
<div class="hl" style="left:26px;top:593px;width:754px"></div>
<div class="vl" style="left:237px;top:575px;height:19px"></div>
<div class="vl" style="left:380px;top:575px;height:19px"></div>
<div class="vl" style="left:521px;top:575px;height:19px"></div>
<div class="vl" style="left:652px;top:575px;height:19px"></div>
<div class="vl" style="left:779px;top:575px;height:19px"></div>
<div class="hl" style="left:26px;top:593px;width:754px"></div>
<div class="hl" style="left:26px;top:611px;width:754px"></div>
<div class="vl" style="left:237px;top:593px;height:19px"></div>
<div class="vl" style="left:380px;top:593px;height:19px"></div>
<div class="vl" style="left:521px;top:593px;height:19px"></div>
<div class="vl" style="left:652px;top:593px;height:19px"></div>
<div class="vl" style="left:779px;top:593px;height:19px"></div>
<div class="hl" style="left:26px;top:611px;width:754px"></div>
<div class="hl" style="left:26px;top:639px;width:754px"></div>
<div class="hl" style="left:26px;top:664px;width:754px"></div>
<div class="vl" style="left:237px;top:639px;height:26px"></div>
<div class="vl" style="left:380px;top:639px;height:26px"></div>
<div class="vl" style="left:521px;top:639px;height:26px"></div>
<div class="vl" style="left:652px;top:639px;height:26px"></div>
<div class="vl" style="left:779px;top:639px;height:26px"></div>
<div class="a" style="left:237px;top:630px;width:1px;height:9px;background:#d9dde3"></div>
<div class="a" style="left:380px;top:630px;width:1px;height:9px;background:#d9dde3"></div>
<div class="a" style="left:521px;top:630px;width:1px;height:9px;background:#d9dde3"></div>
<div class="a" style="left:652px;top:630px;width:1px;height:9px;background:#d9dde3"></div>
<div class="cell" style="left:28px;top:183px;color:#000">Your Name or Company</div>
<div class="cell c" style="left:238px;top:216px;width:142px;color:#000">Rental #1</div>
<div class="cell c" style="left:381px;top:216px;width:140px;color:#000">Rental #2</div>
<div class="cell c" style="left:522px;top:216px;width:130px;color:#000">Rental #3</div>
<div class="cell b" style="left:28px;top:244px;color:#fff">Property Name</div>
<div class="cell b c" style="left:238px;top:244px;width:142px;color:#000">Galveston Condo</div>
<div class="cell b c" style="left:381px;top:244px;width:140px;color:#000">Conroe House</div>
<div class="cell b c" style="left:522px;top:244px;width:130px;color:#000">Florida House</div>
<div class="cell b c" style="left:653px;top:244px;width:126px;color:#000">Totals</div>
<div class="cell b" style="left:28px;top:280px;color:#000">Annual Rental Income</div>
<div class="cell c" style="left:238px;top:280px;width:142px;color:#000">7,200.00</div>
<div class="cell c" style="left:381px;top:280px;width:140px;color:#000">5,000.00</div>
<div class="cell c" style="left:522px;top:280px;width:130px;color:#000">5,400.00</div>
<div class="cell c" style="left:653px;top:280px;width:126px;color:#000">17,600.00</div>
<div class="cell b" style="left:28px;top:309px;color:#fff">Expense Categories</div>
<div class="cell" style="left:28px;top:327px;color:#000">Advertising</div>
<div class="cell c" style="left:238px;top:327px;width:142px;color:#000">0.00</div>
<div class="cell c" style="left:381px;top:327px;width:140px;color:#000">120.00</div>
<div class="cell c" style="left:522px;top:327px;width:130px;color:#000">50.00</div>
<div class="cell c" style="left:653px;top:327px;width:126px;color:#000">170.00</div>
<div class="cell" style="left:28px;top:345px;color:#000">Auto and Travel</div>
<div class="cell c" style="left:238px;top:345px;width:142px;color:#000">0.00</div>
<div class="cell c" style="left:381px;top:345px;width:140px;color:#000">0.00</div>
<div class="cell c" style="left:522px;top:345px;width:130px;color:#000">600.00</div>
<div class="cell c" style="left:653px;top:345px;width:126px;color:#000">600.00</div>
<div class="cell" style="left:28px;top:363px;color:#000">Cleaning &amp; Maintenance</div>
<div class="cell c" style="left:238px;top:363px;width:142px;color:#000">0.00</div>
<div class="cell c" style="left:381px;top:363px;width:140px;color:#000">50.00</div>
<div class="cell c" style="left:522px;top:363px;width:130px;color:#000">0.00</div>
<div class="cell c" style="left:653px;top:363px;width:126px;color:#000">50.00</div>
<div class="cell" style="left:28px;top:381px;color:#000">Commissions</div>
<div class="cell c" style="left:238px;top:381px;width:142px;color:#000">100.00</div>
<div class="cell c" style="left:381px;top:381px;width:140px;color:#000">60.00</div>
<div class="cell c" style="left:522px;top:381px;width:130px;color:#000">0.00</div>
<div class="cell c" style="left:653px;top:381px;width:126px;color:#000">160.00</div>
<div class="cell" style="left:28px;top:399px;color:#000">Insurance</div>
<div class="cell c" style="left:238px;top:399px;width:142px;color:#000">0.00</div>
<div class="cell c" style="left:381px;top:399px;width:140px;color:#000">0.00</div>
<div class="cell c" style="left:522px;top:399px;width:130px;color:#000">0.00</div>
<div class="cell c" style="left:653px;top:399px;width:126px;color:#000">0.00</div>
<div class="cell" style="left:28px;top:417px;color:#000">Legal &amp; other professional fees</div>
<div class="cell c" style="left:238px;top:417px;width:142px;color:#000">0.00</div>
<div class="cell c" style="left:381px;top:417px;width:140px;color:#000">0.00</div>
<div class="cell c" style="left:522px;top:417px;width:130px;color:#000">0.00</div>
<div class="cell c" style="left:653px;top:417px;width:126px;color:#000">0.00</div>
<div class="cell" style="left:28px;top:435px;color:#000">Management Fees</div>
<div class="cell c" style="left:238px;top:435px;width:142px;color:#000">3,500.00</div>
<div class="cell c" style="left:381px;top:435px;width:140px;color:#000">1,650.00</div>
<div class="cell c" style="left:522px;top:435px;width:130px;color:#000">0.00</div>
<div class="cell c" style="left:653px;top:435px;width:126px;color:#000">5,150.00</div>
<div class="cell" style="left:28px;top:453px;color:#000">Other Interest</div>
<div class="cell c" style="left:238px;top:453px;width:142px;color:#000">0.00</div>
<div class="cell c" style="left:381px;top:453px;width:140px;color:#000">0.00</div>
<div class="cell c" style="left:522px;top:453px;width:130px;color:#000">0.00</div>
<div class="cell c" style="left:653px;top:453px;width:126px;color:#000">0.00</div>
<div class="cell" style="left:28px;top:471px;color:#000">Repairs</div>
<div class="cell c" style="left:238px;top:471px;width:142px;color:#000">50.00</div>
<div class="cell c" style="left:381px;top:471px;width:140px;color:#000">0.00</div>
<div class="cell c" style="left:522px;top:471px;width:130px;color:#000">0.00</div>
<div class="cell c" style="left:653px;top:471px;width:126px;color:#000">50.00</div>
<div class="cell" style="left:28px;top:489px;color:#000">Supplies</div>
<div class="cell c" style="left:238px;top:489px;width:142px;color:#000">0.00</div>
<div class="cell c" style="left:381px;top:489px;width:140px;color:#000">0.00</div>
<div class="cell c" style="left:522px;top:489px;width:130px;color:#000">240.00</div>
<div class="cell c" style="left:653px;top:489px;width:126px;color:#000">240.00</div>
<div class="cell" style="left:28px;top:507px;color:#000">Taxes</div>
<div class="cell c" style="left:238px;top:507px;width:142px;color:#000">0.00</div>
<div class="cell c" style="left:381px;top:507px;width:140px;color:#000">0.00</div>
<div class="cell c" style="left:522px;top:507px;width:130px;color:#000">0.00</div>
<div class="cell c" style="left:653px;top:507px;width:126px;color:#000">0.00</div>
<div class="cell" style="left:28px;top:525px;color:#000">Utilities</div>
<div class="cell c" style="left:238px;top:525px;width:142px;color:#000">700.00</div>
<div class="cell c" style="left:381px;top:525px;width:140px;color:#000">0.00</div>
<div class="cell c" style="left:522px;top:525px;width:130px;color:#000">0.00</div>
<div class="cell c" style="left:653px;top:525px;width:126px;color:#000">700.00</div>
<div class="cell" style="left:28px;top:543px;color:#000">Depreciations Expense or Depletion</div>
<div class="cell c" style="left:238px;top:543px;width:142px;color:#000">0.00</div>
<div class="cell c" style="left:381px;top:543px;width:140px;color:#000">500.00</div>
<div class="cell c" style="left:522px;top:543px;width:130px;color:#000">0.00</div>
<div class="cell c" style="left:653px;top:543px;width:126px;color:#000">500.00</div>
<div class="cell" style="left:28px;top:561px;color:#000">Other</div>
<div class="cell c" style="left:238px;top:561px;width:142px;color:#000">0.00</div>
<div class="cell c" style="left:381px;top:561px;width:140px;color:#000">0.00</div>
<div class="cell c" style="left:522px;top:561px;width:130px;color:#000">0.00</div>
<div class="cell c" style="left:653px;top:561px;width:126px;color:#000">0.00</div>
<div class="cell c" style="left:238px;top:579px;width:142px;color:#000">0.00</div>
<div class="cell c" style="left:381px;top:579px;width:140px;color:#000">0.00</div>
<div class="cell c" style="left:522px;top:579px;width:130px;color:#000">100.00</div>
<div class="cell c" style="left:653px;top:579px;width:126px;color:#000">100.00</div>
<div class="cell c" style="left:238px;top:597px;width:142px;color:#000">0.00</div>
<div class="cell c" style="left:381px;top:597px;width:140px;color:#000">0.00</div>
<div class="cell c" style="left:522px;top:597px;width:130px;color:#000">100.00</div>
<div class="cell c" style="left:653px;top:597px;width:126px;color:#000">100.00</div>
<div class="cell b" style="left:28px;top:615px;color:#fff">Total Expenses</div>
<div class="cell b bn c" style="left:238px;top:615px;width:142px;color:#fff">4,350.00</div>
<div class="cell b bn c" style="left:381px;top:615px;width:140px;color:#fff">2,380.00</div>
<div class="cell b bn c" style="left:522px;top:615px;width:130px;color:#fff">1,090.00</div>
<div class="cell b bn c" style="left:653px;top:615px;width:126px;color:#fff">7,820.00</div>
<div class="cell b" style="left:28px;top:650px;color:#000">Total Profit/ Loss</div>
<div class="cell b bn c" style="left:238px;top:650px;width:142px;color:#000">2,850.00</div>
<div class="cell b bn c" style="left:381px;top:650px;width:140px;color:#000">2,620.00</div>
<div class="cell b bn c" style="left:522px;top:650px;width:130px;color:#000">4,310.00</div>
<div class="cell b bn c" style="left:653px;top:650px;width:126px;color:#000">9,780.00</div>
<div class="a" style="left:520px;top:229px;width:134px;height:31px;border:1px solid #000"></div>
<div class="a" style="left:521px;top:230px;width:132px;height:29px;border:1px solid #fff"></div>
<div class="a" style="left:522px;top:231px;width:130px;height:27px;border:1px solid #000"></div>
<div class="a" style="left:650px;top:256px;width:6px;height:6px;background:#000;border:1px solid #fff"></div>
<div class="a" style="left:0;top:683px;width:960px;height:15px;background:linear-gradient(#afc3df,#9fb6d6)"></div>
<div class="a" style="left:0;top:683px;width:62px;height:15px;background:linear-gradient(#e1eaf6,#cfdcee)"></div>
<div class="a" style="left:0;top:682px;width:960px;height:1px;background:#9eb1c8"></div>
<div class="a" style="left:0;top:697px;width:960px;height:1px;background:#6f86a6"></div>
<div class="a" style="left:6px;top:686px;width:1px;height:8px;background:#1f3d72"></div>
<div class="a" style="left:8px;top:686px;width:0;height:0;border-top:4px solid transparent;border-bottom:4px solid transparent;border-right:4px solid #1f3d72"></div>
<div class="a" style="left:22px;top:686px;width:0;height:0;border-top:4px solid transparent;border-bottom:4px solid transparent;border-right:4px solid #1f3d72"></div>
<div class="a" style="left:36px;top:686px;width:0;height:0;border-top:4px solid transparent;border-bottom:4px solid transparent;border-left:4px solid #1f3d72"></div>
<div class="a" style="left:50px;top:686px;width:0;height:0;border-top:4px solid transparent;border-bottom:4px solid transparent;border-left:4px solid #1f3d72"></div>
<div class="a" style="left:55px;top:686px;width:1px;height:8px;background:#1f3d72"></div>
<svg class="a" style="left:0;top:682px" width="960" height="16" viewBox="0 0 960 16">
<defs><linearGradient id="tg" x1="0" y1="0" x2="0" y2="1"><stop offset="0" stop-color="#e9f0f9"/><stop offset="1" stop-color="#cad9ee"/></linearGradient></defs>
<path d="M388 15.5 L401 0.5 L435 0.5 L422 15.5 Z" fill="url(#tg)" stroke="#8ea5c6"/>
<path d="M268 15.5 L281 0.5 L401 0.5 L388 15.5 Z" fill="url(#tg)" stroke="#8ea5c6"/>
<path d="M132 15.5 L145 0.5 L281 0.5 L268 15.5 Z" fill="url(#tg)" stroke="#8ea5c6"/>
<path d="M62 0.5 L62 15.5 L130 15.5 L143 0.5 Z" fill="#f5f8fc" stroke="#8ea5c6"/>
</svg>
<div class="a" style="left:63px;top:682px;width:78px;height:2px;background:#f5f8fc"></div>
<div class="t" style="left:72px;top:684px;font:bold 12px 'Liberation Sans',sans-serif;color:#1f3d6c;line-height:14px;letter-spacing:.2px">Summary</div>
<div class="t" style="left:151px;top:684px;font-size:12px;color:#243f6a;line-height:14px">Standard Expenses</div>
<div class="t" style="left:284px;top:684px;font-size:12px;color:#243f6a;line-height:14px;letter-spacing:-.2px">Variable Expenses</div>
<div class="a" style="left:405px;top:686px;width:11px;height:9px;border:1px solid #555;background:#fff;border-radius:1px"></div>
<div class="a" style="left:403px;top:684px;width:5px;height:5px;border-radius:3px;background:#f2c230"></div>
<div class="a" style="left:809px;top:683px;width:6px;height:14px;background:#fff;border:1px solid #8aa0c0"></div>
<div class="a" style="left:811px;top:686px;width:1px;height:8px;background:#333"></div>
<div class="a" style="left:815px;top:683px;width:18px;height:14px;background:linear-gradient(#9bb3d6,#8aa5cf)"></div>
<div class="a" style="left:821px;top:686px;width:0;height:0;border-top:4px solid transparent;border-bottom:4px solid transparent;border-right:4px solid #2f4e7e"></div>
<div class="a" style="left:834px;top:683px;width:126px;height:14px;background:linear-gradient(#f6f8fb,#dde3ec 60%,#c9d2df);border:1px solid #8a9bb6;border-radius:2px 0 0 2px"></div>
<div class="a" style="left:0;top:698px;width:960px;height:22px;background:linear-gradient(#dbe6f5,#d0def2 50%,#c3d5ee)"></div>
<div class="a" style="left:0;top:698px;width:960px;height:1px;background:#fff"></div>
<div class="t" style="left:8px;top:703px;color:#1e3e6e;font-size:11px;line-height:14px">Ready</div>
<div class="a" style="left:46px;top:700px;width:1px;height:20px;background:#aebfd8;box-shadow:1px 0 0 #f1f5fb"></div>
<div class="a" style="left:17px;top:716px;width:26px;height:12px;border-radius:13px/6px;border:1px solid #7e8a9a;background:linear-gradient(#e8eef6,#cdd8e6)"></div>
</body></html>
